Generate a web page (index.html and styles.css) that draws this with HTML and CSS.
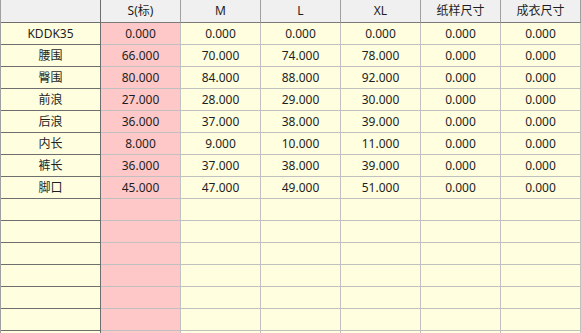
FILE: index.html
```html
<!DOCTYPE html>
<html lang="zh">
<head>
<meta charset="utf-8">
<title>尺寸表</title>
<link rel="stylesheet" href="styles.css">
</head>
<body>
<div class="grid">
  <div class="cell hd rh"></div>
  <div class="cell hd">S(标)</div>
  <div class="cell hd">M</div>
  <div class="cell hd">L</div>
  <div class="cell hd">XL</div>
  <div class="cell hd">纸样尺寸</div>
  <div class="cell hd">成衣尺寸</div>

  <div class="cell rh">KDDK35</div><div class="cell base">0.000</div><div class="cell">0.000</div><div class="cell">0.000</div><div class="cell">0.000</div><div class="cell">0.000</div><div class="cell">0.000</div>
  <div class="cell rh">腰围</div><div class="cell base">66.000</div><div class="cell">70.000</div><div class="cell">74.000</div><div class="cell">78.000</div><div class="cell">0.000</div><div class="cell">0.000</div>
  <div class="cell rh">臀围</div><div class="cell base">80.000</div><div class="cell">84.000</div><div class="cell">88.000</div><div class="cell">92.000</div><div class="cell">0.000</div><div class="cell">0.000</div>
  <div class="cell rh">前浪</div><div class="cell base">27.000</div><div class="cell">28.000</div><div class="cell">29.000</div><div class="cell">30.000</div><div class="cell">0.000</div><div class="cell">0.000</div>
  <div class="cell rh">后浪</div><div class="cell base">36.000</div><div class="cell">37.000</div><div class="cell">38.000</div><div class="cell">39.000</div><div class="cell">0.000</div><div class="cell">0.000</div>
  <div class="cell rh">内长</div><div class="cell base">8.000</div><div class="cell">9.000</div><div class="cell">10.000</div><div class="cell">11.000</div><div class="cell">0.000</div><div class="cell">0.000</div>
  <div class="cell rh">裤长</div><div class="cell base">36.000</div><div class="cell">37.000</div><div class="cell">38.000</div><div class="cell">39.000</div><div class="cell">0.000</div><div class="cell">0.000</div>
  <div class="cell rh">脚口</div><div class="cell base">45.000</div><div class="cell">47.000</div><div class="cell">49.000</div><div class="cell">51.000</div><div class="cell">0.000</div><div class="cell">0.000</div>

  <div class="cell rh"></div><div class="cell base"></div><div class="cell"></div><div class="cell"></div><div class="cell"></div><div class="cell"></div><div class="cell"></div>
  <div class="cell rh"></div><div class="cell base"></div><div class="cell"></div><div class="cell"></div><div class="cell"></div><div class="cell"></div><div class="cell"></div>
  <div class="cell rh"></div><div class="cell base"></div><div class="cell"></div><div class="cell"></div><div class="cell"></div><div class="cell"></div><div class="cell"></div>
  <div class="cell rh"></div><div class="cell base"></div><div class="cell"></div><div class="cell"></div><div class="cell"></div><div class="cell"></div><div class="cell"></div>
  <div class="cell rh"></div><div class="cell base"></div><div class="cell"></div><div class="cell"></div><div class="cell"></div><div class="cell"></div><div class="cell"></div>
  <div class="cell rh"></div><div class="cell base"></div><div class="cell"></div><div class="cell"></div><div class="cell"></div><div class="cell"></div><div class="cell"></div>
  <div class="cell rh"></div><div class="cell base"></div><div class="cell"></div><div class="cell"></div><div class="cell"></div><div class="cell"></div><div class="cell"></div>
</div>
</body>
</html>
```
FILE: styles.css
```css
html, body {
  margin: 0;
  padding: 0;
  overflow: hidden;
  background: #ffffe0;
}
.grid {
  display: grid;
  grid-template-columns: 100px repeat(6, 80px);
  grid-template-rows: 23px;
  grid-auto-rows: 22px;
  border-left: 1px solid #a0a0a0;
  width: 580px;
  height: 333px;
  overflow: hidden;
  font-family: "Noto Sans", "Noto Sans CJK SC", sans-serif;
  font-size: 12px;
  color: #1e1e1e;
}
.cell {
  box-sizing: border-box;
  display: flex;
  align-items: center;
  justify-content: center;
  background: #ffffe0;
  border-right: 1px solid #c0c0c0;
  border-bottom: 1px solid #c0c0c0;
  line-height: 1;
  white-space: nowrap;
}
.hd {
  background: #f0f0f0;
  border-right: 1px solid #a0a0a0;
  border-bottom: 1px solid #7a7a7a;
  padding-bottom: 1px;
}
.rh {
  border-right: 1px solid #6e6e6e;
  border-bottom: 1px solid #6e6e6e;
}
.base {
  background: #ffc8c8;
}
```
